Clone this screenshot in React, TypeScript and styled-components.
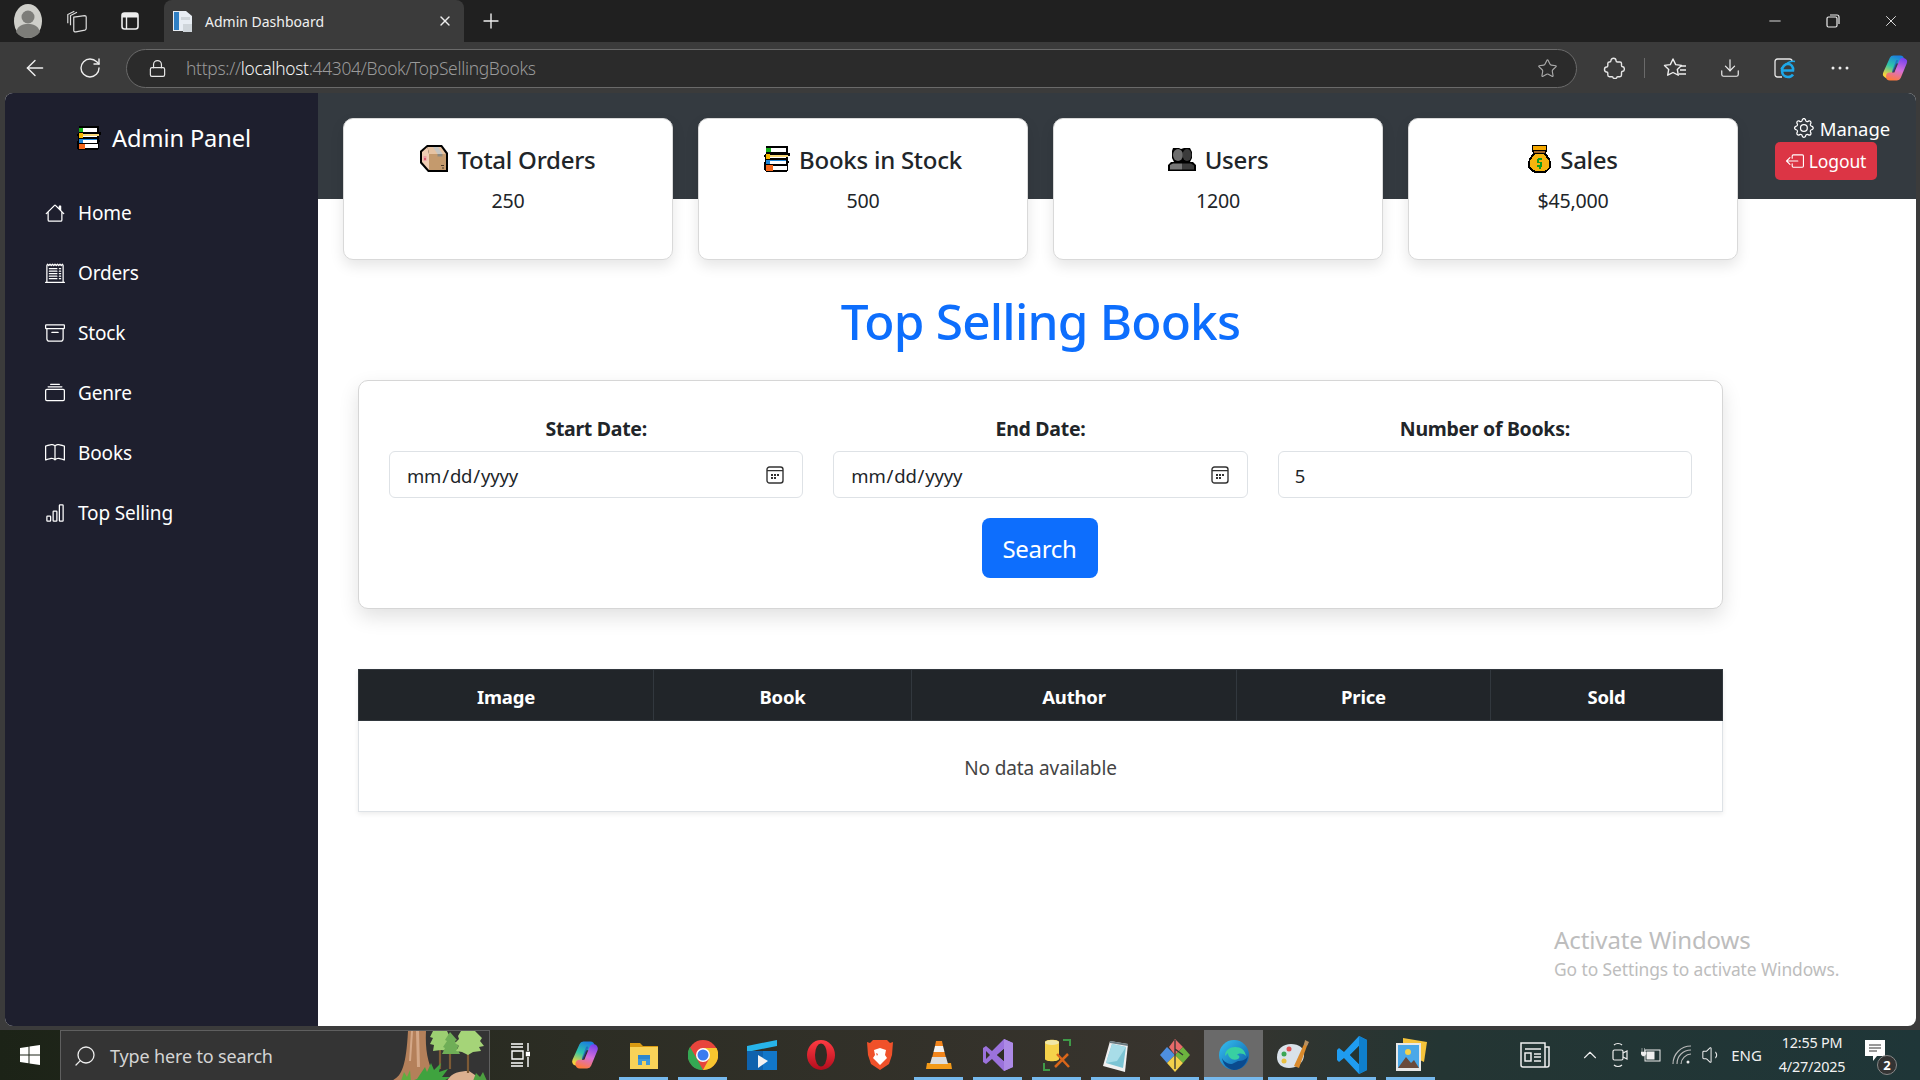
import React from "react";
import styled, { createGlobalStyle } from "styled-components";
import { BsHouse, BsReceiptCutoff, BsArchive, BsCollection, BsBook, BsBarChart, BsGear, BsBoxArrowLeft } from "react-icons/bs";
import { ArrowLeft, RotateCw, Lock, Star, Download, Plus, X, Minus, Search as SearchGlyph, ChevronUp, Volume1 } from "lucide-react";

const FONT = `"Noto Sans", "Open Sans", sans-serif`;
const CALENDAR = `url("data:image/svg+xml,%3Csvg xmlns='http://www.w3.org/2000/svg' viewBox='0 0 18 18' fill='none'%3E%3Crect x='1' y='1' width='16' height='16' rx='2.5' stroke='%23333' stroke-width='1.4'/%3E%3Cpath d='M1 4.6h16' stroke='%23333' stroke-width='1.4'/%3E%3Cpath d='M5 8h2v2H5zM8 8h2v2H8zM11 8h2v2h-2zM5 11h2v2H5zM8 11h2v2H8z' fill='%23333'/%3E%3C/svg%3E")`;

const Global = createGlobalStyle`
  * { box-sizing: border-box; }
  html, body { margin: 0; padding: 0; background: #3b3b3b; }
  body { font-family: ${FONT}; color: #212529; overflow: hidden; }
`;

const Screen = styled.div`
  width: 1920px; height: 1080px; display: flex; flex-direction: column; position: relative; overflow: hidden;
`;
const TabStrip = styled.div`
  height: 42px; background: #202020; display: flex; align-items: center; color: #fff; flex: none;
`;
const StripButton = styled.div<{ $w: number }>`
  width: ${p => p.$w}px; height: 42px; flex: none; display: flex; align-items: center; justify-content: center;
`;
const Tab = styled.div`
  width: 300px; height: 42px; background: #3b3b3b; border-radius: 8px 8px 0 0; display: flex; align-items: center;
  padding: 0 11px 0 9px; gap: 12px; flex: none;
`;
const TabTitle = styled.span`
  flex: 1; font-size: 14px; color: #f0f0f0; letter-spacing: 0; white-space: nowrap;
`;
const WindowControls = styled.div`
  margin-left: auto; display: flex; padding-right: 0;
`;
const WindowButton = styled.div`
  width: 58px; height: 42px; display: flex; align-items: center; justify-content: center;
`;
const Toolbar = styled.div`
  height: 51px; background: #3b3b3b; display: flex; align-items: center; padding-left: 10px; flex: none; color: #fff;
`;
const NavButton = styled.div`
  width: 50px; height: 40px; display: flex; align-items: center; justify-content: center; margin-right: 5px; flex: none;
`;
const UrlBar = styled.div`
  width: 1451px; height: 39px; margin-left: 6px; border: 1px solid #6a6a6a; border-radius: 20px; background: #2b2b2b;
  display: flex; align-items: center; padding: 0 18px 0 21px; flex: none; margin-top: 1px;
`;
const UrlText = styled.span`
  margin-left: 19px; font-size: 17.4px; color: #9a9a9a; letter-spacing: -.3px; white-space: nowrap; flex: 1; font-weight: 300;
`;
const UrlHost = styled.span`
  color: #f4f4f4;
`;
const ToolGroup = styled.div`
  display: flex; align-items: center; gap: 11px; margin-left: 15px;
`;
const ToolButton = styled.div`
  width: 44px; height: 40px; display: flex; align-items: center; justify-content: center; flex: none;
`;
const ToolDivider = styled.div`
  width: 1px; height: 20px; background: #6a6a6a; margin: 0 -3px;
`;
const Frame = styled.div`
  flex: 1; min-height: 0; display: flex; padding: 0 4px 4px 5px; background: #3b3b3b;
`;
const Page = styled.div`
  flex: 1; display: flex; background: #fff; border-radius: 8px; overflow: hidden; position: relative;
`;
const Sidebar = styled.nav`
  width: 313px; flex: none; background: #1e1f2e; color: #fff; padding-top: 29px; display: flex; flex-direction: column;
`;
const Brand = styled.div`
  display: flex; align-items: center; justify-content: center; gap: 11px; font-size: 23.6px; height: 32px; padding-left: 5px;
  letter-spacing: -.1px; margin-bottom: 29px;
`;
const NavList = styled.div`
  display: flex; flex-direction: column; padding-left: 40px;
`;
const NavItem = styled.a`
  height: 60px; display: flex; align-items: center; gap: 13px; font-size: 19px; color: #fff; letter-spacing: -.15px;
  svg { width: 20px; height: 20px; flex: none; }
`;
const Main = styled.main`
  flex: 1; min-width: 0; display: flex; flex-direction: column;
`;
const Band = styled.header`
  height: 106px; background: #343a40; flex: none; display: flex; padding: 23px 0 0 25px; gap: 37px;
`;
const Cards = styled.div`
  display: flex; gap: 25px; margin-top: 2px;
`;
const Card = styled.section`
  width: 330px; height: 142px; background: #fff; border: 1px solid #d9d9d9; border-radius: 10px; flex: none;
  box-shadow: 0 6px 14px rgba(0,0,0,.1); display: flex; flex-direction: column; align-items: center; padding-top: 22px;
`;
const CardTitle = styled.h3`
  margin: 0; height: 36px; display: flex; align-items: center; gap: 9px; font-size: 24px; font-weight: 500; letter-spacing: -.25px; color: #212529;
`;
const CardValue = styled.p`
  margin: 11px 0 0; font-size: 19.6px; line-height: 26px; letter-spacing: -.2px; color: #212529;
`;
const Actions = styled.div`
  display: flex; flex-direction: column; width: 115px; color: #fff;
`;
const ManageLink = styled.a`
  height: 24px; margin-bottom: 2px; display: flex; align-items: center; gap: 6px; font-size: 18.5px; color: #fff; margin-left: 19px; white-space: nowrap;
  letter-spacing: -.1px;
  svg { width: 20px; height: 20px; }
`;
const LogoutButton = styled.button`
  width: 102px; height: 38px; background: #dc3545; color: #fff; border: 0; border-radius: 5px; font: 17.5px ${FONT}; display: flex; align-items: center;
  justify-content: center; gap: 5px; padding: 0; letter-spacing: -.1px;
  svg { width: 18px; height: 18px; }
`;
const Content = styled.div`
  padding: 0 193px 0 40px; display: flex; flex-direction: column; flex: 1;
`;
const Heading = styled.h1`
  margin: 97px 0 0; height: 50px; line-height: 50px; text-align: center; color: #0d6efd; font-size: 49.5px; font-weight: 500; letter-spacing: -.8px;
  white-space: nowrap;
`;
const FilterCard = styled.form`
  margin-top: 34px; height: 229px; border: 1px solid #d6d6d6; border-radius: 10px; background: #fff; box-shadow: 0 8px 20px rgba(0,0,0,.12);
  padding: 34px 30px 0; display: flex; flex-direction: column;
`;
const Fields = styled.div`
  display: grid; grid-template-columns: repeat(3, 1fr); gap: 30px;
`;
const Field = styled.label`
  display: flex; flex-direction: column; align-items: stretch; text-align: center; gap: 9px; font-size: 19.5px; font-weight: 700; color: #212529; letter-spacing: -.3px; line-height: 27px;
`;
const Input = styled.input`
  height: 47px; width: 100%; border: 1px solid #dee2e6; border-radius: 6px; padding: 2px 16px 0; font: 400 18.5px ${FONT}; color: #212529; background: #fff;
  letter-spacing: -.2px; outline: none;
  &::-webkit-calendar-picker-indicator { background: ${CALENDAR} center / 100% 100% no-repeat; width: 18px; height: 18px; padding: 0; margin: -2px 2px 0 0; }
`;
const SearchButton = styled.button`
  align-self: center; width: 116px; height: 60px; margin: 20px 2px 0 0; background: #0d6efd; color: #fff; border: 0; border-radius: 8px; font: 400 24px ${FONT}; letter-spacing: -.3px;
`;
const DataTable = styled.table`
  margin-top: 60px; width: 1364px; border-collapse: collapse; table-layout: fixed; box-shadow: 0 2px 5px rgba(0,0,0,.08); background: #fff;
`;
const HeadCell = styled.th<{ $w: number }>`
  width: ${p => p.$w}px; height: 51px; background: #212529; color: #fff; font-size: 18.5px; font-weight: 700; border: 1px solid #32383e; letter-spacing: -.2px; padding: 2px 0 0;
`;
const EmptyCell = styled.td`
  height: 91px; text-align: center; font-size: 19px; color: #444; border: 1px solid #dee2e6; letter-spacing: -.1px; padding: 3px 0 0;
`;
const Watermark = styled.div`
  position: absolute; left: 1549px; top: 832px; color: #bdbdbd; line-height: 1; white-space: nowrap; pointer-events: none;
`;
const WatermarkTitle = styled.div`
  font-size: 24px; letter-spacing: -.1px; height: 30px; line-height: 30px;
`;
const WatermarkLine = styled.div`
  font-size: 17.4px; letter-spacing: -.08px; height: 28px; line-height: 28px;
`;
const Taskbar = styled.footer`
  height: 50px; flex: none; display: flex; align-items: stretch; color: #fff;
  background: linear-gradient(90deg, #1c2317 0%, #2c2d24 30%, #38342e 62%, #243533 75%, #1f3638 100%);
`;
const StartCell = styled.div`
  width: 60px; flex: none; display: flex; align-items: center; justify-content: center;
`;
const SearchBox = styled.div`
  width: 430px; flex: none; background: #343434; border: 1px solid #5f5f5f; border-bottom: 0; display: flex; align-items: center; padding-left: 12px; gap: 13px; overflow: hidden;
`;
const SearchHint = styled.span`
  font-size: 18px; color: #d4d4d4; letter-spacing: -.15px; flex: 1; white-space: nowrap;
`;
const TaskCell = styled.div<{ $w?: number; $pr?: number; $run?: boolean; $active?: boolean }>`
  width: ${p => p.$w ?? 59}px; padding-right: ${p => p.$pr ?? 0}px; flex: none; display: flex; align-items: center; justify-content: center; position: relative;
  background: ${p => (p.$active ? "#6a6a6a" : "transparent")};
  &::after {
    content: ""; display: ${p => (p.$run ? "block" : "none")}; position: absolute; bottom: 0; height: 3px; background: #76b9ed;
    left: ${p => (p.$active ? 0 : 5)}px; right: ${p => (p.$active ? 0 : 5)}px;
  }
`;
const Tray = styled.div`
  margin-left: auto; display: flex; align-items: stretch; padding-right: 25px;
`;
const TrayCell = styled.div<{ $w: number; $gap?: number }>`
  width: ${p => p.$w}px; margin-left: ${p => p.$gap ?? 0}px; display: flex; align-items: center; justify-content: center; font-size: 15px; color: #f0f0f0; flex: none;
`;
const Clock = styled.div`
  display: flex; flex-direction: column; align-items: center; font-size: 14.4px; line-height: 24px; letter-spacing: -.2px; color: #f2f2f2; white-space: nowrap;
`;
const NotifyBadge = styled.div`
  position: relative; width: 26px; height: 30px;
`;
const NotifyCount = styled.span`
  position: absolute; right: -6px; bottom: -5px; width: 20px; height: 20px; border-radius: 50%; background: #333; border: 1px solid #888; font-size: 13px; font-weight: 700; display: flex; align-items: center; justify-content: center; color: #fff;
`;

/* ---------- drawings ---------- */
const Avatar = () => (
  <svg width="28" height="34" viewBox="0 0 28 34"><ellipse cx="14" cy="17" rx="14" ry="17" fill="#cfcfca"/><circle cx="14" cy="13" r="6.5" fill="#7d7d79"/><path d="M2 28c2-7 7-8 12-8s10 1 12 8c-3 4-7 6-12 6s-9-2-12-6z" fill="#7d7d79"/></svg>
);
const Workspaces = () => (
  <svg width="26" height="26" viewBox="0 0 24 24" fill="none" stroke="#ddd" strokeWidth="1.1"><path d="M6 16V7l6-3M3.500 14V6l6-3"/><path d="M9 8.500l10-1.500c1 0 1.500.5 1.500 1.300V19c0 .8-.5 1.200-1.200 1.400L11 22c-1 .2-2-.3-2-1.300z"/></svg>
);
const VerticalTabs = () => (
  <svg width="20" height="20" viewBox="0 0 20 20" fill="none"><rect x="2" y="2" width="16" height="16" rx="2.5" stroke="#eee" strokeWidth="1.6"/><path d="M2 6.500V4.500C2 3 3 2 4.500 2h11C17 2 18 3 18 4.500v2z" fill="#eee"/><path d="M6.500 6v12" stroke="#eee" strokeWidth="1.4"/></svg>
);
const Favicon = () => (
  <svg width="20" height="24" viewBox="0 0 20 24"><path d="M0 2h13l6 5v15H0z" fill="#e8edf3"/><path d="M1 3h5v18H1z" fill="#2f7fc4"/><path d="M8 8h9v3H8zM10 15h9v8h-9z" fill="#cfd5da"/></svg>
);
const Puzzle = () => (
  <svg width="22" height="22" viewBox="0 0 22 22" fill="none" stroke="#e6e6e6" strokeWidth="1.4" strokeLinejoin="round"><path d="M8 3.500c0-3 5-3 5 0 0 1 0 1.500 1.500 1.500H17c1 0 1.500.6 1.500 1.500v2c0 1 .6 1.200 1.200 1.200 2.200 0 2.200 4.600 0 4.600-.6 0-1.200.4-1.200 1.200V18c0 1-.6 1.700-1.600 1.700h-2.200c-.8 0-1 .5-1 1 0 1-3.600 1-3.600 0 0-.5-.4-1-1-1H6.500c-1 0-1.700-.6-1.700-1.600V16c0-.9-.5-1-1.200-1-2.800 0-2.800-5 0-5 .8 0 1.200-.5 1.200-1.200V6.600c0-1 .7-1.600 1.600-1.600C7.500 5 8 4.500 8 3.500z"/></svg>
);
const FavStar = () => (
  <svg width="24" height="22" viewBox="0 0 24 22" fill="none" stroke="#eee" strokeWidth="1.4" strokeLinejoin="round"><path d="M10 2l2.700 5.600 5.800.8-4.200 4 1 5.800L10 15.500l-5.300 2.700 1-5.800-4.200-4 5.800-.8z"/><path d="M17 9h6M17 13h6M16 17h7"/></svg>
);
const IeLogo = () => (
  <svg width="22" height="22" viewBox="0 0 22 22" fill="none">
    <path d="M8 20H3.500C2 20 1 19 1 17.500V4.500C1 3 2 2 3.500 2h12C17 2 18 3 18 4" stroke="#e8e8e8" strokeWidth="1.3"/>
    <path d="M8.500 13.500h10.500c.6-4-2-6.500-5-6.500s-6 2.700-6 6.500 2.500 6.500 6 6.500c2.200 0 4-1 5-2.500" stroke="#1ea7e8" strokeWidth="2.600"/>
    <path d="M7 12c4-6 10-8.500 14-7.500" stroke="#1ea7e8" strokeWidth="1.500"/>
  </svg>
);
const Dots = () => (
  <svg width="18" height="4" viewBox="0 0 18 4" fill="#eee"><circle cx="2" cy="2" r="1.500"/><circle cx="9" cy="2" r="1.500"/><circle cx="16" cy="2" r="1.500"/></svg>
);
const Copilot = ({ size = 28, id = "c" }: { size?: number; id?: string }) => (
  <svg width={size} height={size} viewBox="0 0 28 28" fill="none" strokeLinecap="round">
    <defs>
      <linearGradient id={id + "a"} gradientUnits="userSpaceOnUse" x1="14" y1="1" x2="5" y2="25"><stop offset="0" stopColor="#1b7fe0"/><stop offset=".45" stopColor="#2fc7a8"/><stop offset=".85" stopColor="#f6d13d"/></linearGradient>
      <linearGradient id={id + "b"} gradientUnits="userSpaceOnUse" x1="22" y1="3" x2="14" y2="27"><stop offset="0" stopColor="#6a3df0"/><stop offset=".55" stopColor="#d66fd8"/><stop offset="1" stopColor="#ff7a3d"/></linearGradient>
    </defs>
    <path d="M19 5.500H12.500L6 20" stroke={`url(#${id}a)`} strokeWidth="8" strokeLinejoin="round"/>
    <path d="M22 8l-6 14.500H9" stroke={`url(#${id}b)`} strokeWidth="8" strokeLinejoin="round"/>
    <path d="M16 7l-4 10" stroke="#1d4fc4" strokeWidth="2" opacity=".55"/>
  </svg>
);
const BoxEmoji = () => (
  <svg width="28" height="28" viewBox="0 0 28 28"><path d="M7 0h15l6 8v19H8l-8-9V6z" fill="#000"/><path d="M7.500 2H21l5 7H9z" fill="#e6c3a2"/><path d="M2 7l5.500-5L9 9v16l-7-8z" fill="#efcdb4"/><path d="M9 9h17v16H9z" fill="#c49a6d"/><path d="M13 2h5l4.500 7h-5z" fill="#c6c6c2"/><path d="M17.500 9h5v2.500h-5z" fill="#8f8a80"/><path d="M3.500 11h3v5h-3z" fill="#eea0a8"/><path d="M4.500 13h1v2h-1z" fill="#c81e3a"/><path d="M21 20h3v1h-3zM22 22.500h2v1h-2z" fill="#4a3826"/></svg>
);
const BooksEmoji = ({ size = 26 }: { size?: number }) => (
  <svg width={size} height={size} viewBox="0 0 26 26" shapeRendering="crispEdges"><path d="M2 0h22v7h2v3h-2v5h1v2h-1v7l-2 2H2l-2-2v-7l1-2v-3L0 9l2-2z" fill="#000"/><path d="M2 2h5v4H2z" fill="#17b01a"/><path d="M7 2h15v4H7z" fill="#fff"/><path d="M2 8h4v5H2z" fill="#f5b400"/><path d="M6 9h18v2H6z" fill="#f7d778"/><path d="M6 11h16v1H6z" fill="#fff"/><path d="M2 14h4v4H2z" fill="#1d84d6"/><path d="M6 14h16v1H6z" fill="#1d84d6"/><path d="M6 15h16v3H6z" fill="#fff"/><path d="M2 19h7v6H2z" fill="#f5661a"/><path d="M9 20h14v4H9z" fill="#fff"/></svg>
);
const UsersEmoji = () => (
  <svg width="28" height="24" viewBox="0 0 28 24"><path d="M5 1h6l2 1 3-1h6l2 4v6l-2 4h3l3 3v6H0v-6l3-3h3l-2-4V4z" fill="#000"/><ellipse cx="10" cy="8" rx="5" ry="6" fill="#6d6d6d"/><ellipse cx="19" cy="8" rx="4.500" ry="6" fill="#3b3b3b"/><path d="M2 18l3-1.500h9v6H2z" fill="#777"/><path d="M14 16.500h9l3 2V22.500H14z" fill="#3c3c3c"/></svg>
);
const BagEmoji = () => (
  <svg width="23" height="28" viewBox="0 0 23 28" shapeRendering="crispEdges"><path d="M4 0h15v6l-1 2 4 6 1 4v4l-3 4-3 2H7l-4-2-3-4v-4l1-4 4-6-1-2z" fill="#000"/><path d="M5 1h13v4H5z" fill="#f5a800"/><path d="M6 6h11v2H6z" fill="#a0652a"/><path d="M7 9h9l5 7v6l-3 3-3 1H8l-3-1-3-3v-6z" fill="#f6b40e"/><path d="M10 13h4v2h-3v2h3v5h-1v2h-2v-2H9v-2h3v-2H9v-4z" fill="#0f9a1f"/></svg>
);
const WinLogo = () => (
  <svg width="20" height="20" viewBox="0 0 20 20" fill="#fff"><path d="M0 3l8.500-1.200V9.500H0zM9.500 1.600L20 0v9.500H9.500zM0 10.500h8.500v7.700L0 17zM9.500 10.500H20V20L9.500 18.400z"/></svg>
);
const Forest = () => (
  <svg width="100" height="50" viewBox="0 0 100 50" style={{ flex: "none" }}>
    <path d="M2 50c10-4 15-12 17-50h18c-1 20 2 36 12 50z" fill="#b4805a"/>
    <path d="M27 0h3l1 36h-3zM22 0h2l-2 30h-2z" fill="#d4a888"/>
    <path d="M58 50c4-8 12-10 22-10l15 10z" fill="#dcb090"/>
    <path d="M51 14V38M61 12V38M79 14V42" stroke="#7d5a35" strokeWidth="2.2"/>
    <path d="M44 0h14l3 6-2 2 3 5-3 1 1 6-8-1-8 1 1-6-4-1 3-6-3-1z" fill="#9ccf72"/>
    <path d="M61 1l7 8-2 1 4 6-2 1 3 6H53l3-6-2-1 4-6-2-1z" fill="#6fae57"/>
    <path d="M72 0h14l7 7-2 3 4 5-5 1 2 4-8 1-5 3-6-3-6-1 3-5-4-3 4-4-1-3z" fill="#a5d478"/>
    <path d="M28 48l8-12 2 5 4-9 3 7 7-7-2 9 9-3-6 8 8 0-6 4H22z" fill="#3fa33f"/>
    <path d="M12 50l3-9 3 5 3-7 1 11z" fill="#5fae3f"/>
    <path d="M84 50l3-8 4 4 3-5 4 9z" fill="#4da040"/>
  </svg>
);
const TaskView = () => (
  <svg width="20" height="24" viewBox="0 0 20 24" fill="none" stroke="#fff" strokeWidth="1.4"><path d="M1 1h12M1 4h12M1 23h12M1 20h12M2 8h11v8H2z"/><path d="M18 0v8M18 14v10"/><path d="M16.500 9.500h3v3h-3z" fill="#fff"/></svg>
);
const Folder = () => (
  <svg width="28" height="28" viewBox="0 0 28 28"><path d="M0 2h10l3 3h15v4H0z" fill="#d99a12"/><path d="M0 6h28v22H0z" fill="#f8d258"/><path d="M8 16h12v8h-4v-4h-4v4H8z" fill="#3f97d8"/><path d="M8 14h12v4H8z" fill="#2c86cf"/></svg>
);
const Chrome = () => (
  <svg width="30" height="30" viewBox="0 0 30 30"><circle cx="15" cy="15" r="15" fill="#e8453c"/><path d="M15 8h13.500A15 15 0 0 1 15 30l6-11z" fill="#f7c52f"/><path d="M9 19l6 11A15 15 0 0 1 2 7z" fill="#34a853"/><circle cx="15" cy="15" r="7" fill="#fff"/><circle cx="15" cy="15" r="5.500" fill="#3a7cf0"/></svg>
);
const Clapper = () => (
  <svg width="30" height="30" viewBox="0 0 30 30"><path d="M0 6L30 0v6L0 12z" fill="#27b4ea"/><path d="M0 11h30v19H0z" fill="#1277c9"/><path d="M0 11h16v19H0z" fill="#0f62ad"/><path d="M11 15l10 6-10 7z" fill="#f2f2f2"/></svg>
);
const Opera = () => (
  <svg width="28" height="30" viewBox="0 0 28 30"><defs><linearGradient id="op" x1="0" y1="0" x2="0" y2="1"><stop offset="0" stopColor="#ff3b42"/><stop offset="1" stopColor="#b30d1d"/></linearGradient></defs><ellipse cx="14" cy="15" rx="14" ry="15" fill="url(#op)"/><ellipse cx="14" cy="15" rx="6" ry="11.500" fill="#2e2d25"/></svg>
);
const Brave = () => (
  <svg width="26" height="30" viewBox="0 0 26 30"><path d="M6 0h14l3 3 3-1-1 13-3 9-9 6-9-6-3-9L0 2l3 1z" fill="#f0512a"/><path d="M7 10l6-2 6 2-1 5 2 3-4 4-3 3-3-3-4-4 2-3zM11 14l-2-1 1 3zM15 14l2-1-1 3z" fill="#fff"/></svg>
);
const Vlc = () => (
  <svg width="26" height="28" viewBox="0 0 26 28"><path d="M1 22h24l1 6H0z" fill="#f39a18"/><path d="M10 0h6l1 5H9z" fill="#f2851c"/><path d="M9 5h8l1.500 6h-11z" fill="#f3f3f3"/><path d="M7.500 11h11l1.500 6H6z" fill="#f2851c"/><path d="M6 16h14l2 7H4z" fill="#ddd"/></svg>
);
const VisualStudio = () => (
  <svg width="30" height="32" viewBox="0 0 30 32"><path d="M21 0l9 4v24l-9 4-12-12-6 5-3-2V9l3-2 6 5zM3 12v8l4-4zM21 10l-7 6 7 6z" fill="#9b72dc"/><path d="M21 0l9 4v24l-9 4z" fill="#ad8ae6"/><path d="M21 10l-7 6 7 6z" fill="#2e2d25"/></svg>
);
const DbTool = () => (
  <svg width="28" height="32" viewBox="0 0 28 32" fill="none"><path d="M2 3c0-3 14-3 14 0v17c0 3-14 3-14 0z" fill="#f5d24a"/><ellipse cx="9" cy="3.500" rx="7" ry="2.500" fill="#f0e7a8"/><path d="M20 1h7v6M1 24v7h6" stroke="#3f9a48" strokeWidth="2"/><path d="M12 28l13-13M14 15l12 13" stroke="#d9661a" strokeWidth="2.500"/></svg>
);
const Notepad = () => (
  <svg width="28" height="34" viewBox="0 0 28 34"><path d="M8 3l18 3-3 28-22-6z" fill="#f0f0f0"/><path d="M10 6l14 3-3 21-17-5z" fill="#7cc4d4"/><path d="M10 6l14 3-9 14-11 2z" fill="#a8dde8"/><path d="M8 3l18 3v2L8 5z" fill="#6a7a80"/></svg>
);
const Gitlike = () => (
  <svg width="30" height="34" viewBox="0 0 30 34"><path d="M7 9l8 8-8 8-7-8z" fill="#4e8fe0"/><path d="M15 1l8 8-8 8-6-8z" fill="#e86a6a"/><path d="M23 9l7 8-7 8-8-8z" fill="#6cb33f"/><path d="M15 17l8 8-8 9-8-9z" fill="#f2d04c"/><path d="M15 2v29M15 11l8 6" stroke="#333" strokeWidth="1.3"/></svg>
);
const Edge = () => (
  <svg width="30" height="30" viewBox="0 0 30 30"><defs><linearGradient id="ed" x1="0" y1="0" x2="1" y2="1"><stop offset="0" stopColor="#35c1f1"/><stop offset="1" stopColor="#0d5aa6"/></linearGradient></defs><circle cx="15" cy="15" r="15" fill="url(#ed)"/><path d="M6 16c0-6 5-9 10-9 6 0 10 3 11 9-3-3-7-3-9-1 3 0 3 3 1 4-5 2-10-1-10-6-1 1-2 2-3 3z" fill="#38d0a2"/><path d="M19 21c4 0 8-1 10-5-1 8-7 14-14 14-7-1-11-6-12-12 2 4 6 6 10 6z" fill="#0a4a8e"/></svg>
);
const Palette = () => (
  <svg width="32" height="30" viewBox="0 0 32 30"><path d="M14 4c8 0 14 4 13 12-1 8-8 12-15 12C5 28 0 24 0 17 0 9 6 4 14 4z" fill="#d9e2ea"/><circle cx="7" cy="14" r="2.500" fill="#3aa655"/><circle cx="12" cy="9" r="2.500" fill="#e05252"/><circle cx="7" cy="21" r="2.500" fill="#e8c040"/><path d="M17 26L28 2l3 1-9 25z" fill="#d98a2c"/><path d="M28 0l4 2-2 4-3-1z" fill="#b89060"/></svg>
);
const VsCode = () => (
  <svg width="30" height="38" viewBox="0 0 30 38"><path d="M22 0l8 4v30l-8 4L7 22l-5 4-2-2V14l2-2 5 4zM22 10L13 19l9 9z" fill="#1f9cf0"/><path d="M22 0l8 4v30l-8 4z" fill="#0f7fcc"/><path d="M22 10L13 19l9 9z" fill="#243533"/></svg>
);
const Photos = () => (
  <svg width="32" height="34" viewBox="0 0 32 34"><path d="M8 0l24 4-3 20L8 14z" fill="#f5c33b"/><path d="M1 5h25v28H1z" fill="#e8e8e8"/><path d="M3 7h21v23H3z" fill="#4aa8e8"/><circle cx="13" cy="14" r="3" fill="#f5d24a"/><path d="M3 30l8-11 5 6 3-3 5 8z" fill="#6a4a3a"/></svg>
);
const News = () => (
  <svg width="30" height="26" viewBox="0 0 30 26" fill="none" stroke="#f0f0f0" strokeWidth="1.5"><path d="M1 1h24v24H3c-1 0-2-1-2-2zM25 5h4v18c0 1-1 2-2 2h-2"/><path d="M5 7h16"/><path d="M5 11h6v8H5z"/><path d="M14 12h7M14 15h7M14 19h7"/></svg>
);
const Meet = () => (
  <svg width="16" height="26" viewBox="0 0 16 26" fill="none" stroke="#eee" strokeWidth="1.2"><path d="M2 3c2-2 6-2 8 0M2 23c2 2 6 2 8 0"/><rect x="1" y="8" width="10" height="10" rx="1.500"/><path d="M11 11l4-2v8l-4-2"/></svg>
);
const Battery = () => (
  <svg width="20" height="16" viewBox="0 0 20 16" fill="none"><rect x="4" y="3" width="15" height="11" stroke="#eee"/><rect x="5.500" y="4.500" width="8" height="8" fill="#eee"/><path d="M1 1v4M3.500 1v4M0 5h5v2l-1.500 2H1.500L0 7z" fill="#eee" stroke="#eee" strokeWidth=".5"/></svg>
);
const Wifi = () => (
  <svg width="20" height="20" viewBox="0 0 20 20" fill="none" stroke="#bbb" strokeWidth="1.1"><path d="M1 19C1 9 9 1 19 1M5 19c0-8 6-14 14-14M9 19c0-5 5-10 10-10"/><circle cx="16" cy="17" r="1.500" fill="#eee" stroke="none"/></svg>
);

const navItems = [
  { label: "Home", icon: <BsHouse /> },
  { label: "Orders", icon: <BsReceiptCutoff /> },
  { label: "Stock", icon: <BsArchive /> },
  { label: "Genre", icon: <BsCollection /> },
  { label: "Books", icon: <BsBook /> },
  { label: "Top Selling", icon: <BsBarChart /> },
];
const stats = [
  { title: "Total Orders", value: "250", icon: <BoxEmoji /> },
  { title: "Books in Stock", value: "500", icon: <BooksEmoji /> },
  { title: "Users", value: "1200", icon: <UsersEmoji /> },
  { title: "Sales", value: "$45,000", icon: <BagEmoji /> },
];
const columns = [
  { label: "Image", w: 295 },
  { label: "Book", w: 258 },
  { label: "Author", w: 325 },
  { label: "Price", w: 254 },
  { label: "Sold", w: 232 },
];
const apps = [
  { el: <Copilot size={30} id="tb" />, run: false },
  { el: <Folder />, run: true },
  { el: <Chrome />, run: true },
  { el: <Clapper />, run: false },
  { el: <Opera />, run: false },
  { el: <Brave />, run: false },
  { el: <Vlc />, run: true },
  { el: <VisualStudio />, run: true },
  { el: <DbTool />, run: true },
  { el: <Notepad />, run: true },
  { el: <Gitlike />, run: true },
  { el: <Edge />, run: true, active: true },
  { el: <Palette />, run: true },
  { el: <VsCode />, run: true },
  { el: <Photos />, run: true },
];

export default function App() {
  return (
    <Screen>
      <Global />
      <TabStrip>
        <StripButton $w={8} />
        <StripButton $w={40}><Avatar /></StripButton>
        <StripButton $w={58}><Workspaces /></StripButton>
        <StripButton $w={48}><VerticalTabs /></StripButton>
        <StripButton $w={10} />
        <Tab>
          <Favicon />
          <TabTitle>Admin Dashboard</TabTitle>
          <X size={16} color="#eee" />
        </Tab>
        <StripButton $w={54}><Plus size={24} color="#eee" strokeWidth={1.4} /></StripButton>
        <WindowControls>
          <WindowButton><Minus size={18} color="#eee" strokeWidth={1.2} /></WindowButton>
          <WindowButton>
            <svg width="14" height="14" viewBox="0 0 14 14" fill="none" stroke="#eee" strokeWidth="1.2"><rect x="1" y="3" width="10" height="10" rx="1.500"/><path d="M4 1h7c1 0 2 1 2 2v7"/></svg>
          </WindowButton>
          <WindowButton><X size={18} color="#eee" strokeWidth={1.2} /></WindowButton>
        </WindowControls>
      </TabStrip>
      <Toolbar>
        <NavButton><ArrowLeft size={26} strokeWidth={1.3} color="#eee" /></NavButton>
        <NavButton><RotateCw size={24} strokeWidth={1.4} color="#eee" /></NavButton>
        <UrlBar>
          <Lock size={19} strokeWidth={1.5} color="#e8e8e8" />
          <UrlText>https://<UrlHost>localhost</UrlHost>:44304/Book/TopSellingBooks</UrlText>
          <Star size={21} strokeWidth={1.3} color="#aaa" />
        </UrlBar>
        <ToolGroup>
          <ToolButton><Puzzle /></ToolButton>
          <ToolDivider />
          <ToolButton><FavStar /></ToolButton>
          <ToolButton><Download size={22} strokeWidth={1.3} color="#eee" /></ToolButton>
          <ToolButton><IeLogo /></ToolButton>
          <ToolButton><Dots /></ToolButton>
          <ToolButton><Copilot id="tl" /></ToolButton>
        </ToolGroup>
      </Toolbar>
      <Frame>
        <Page>
          <Sidebar>
            <Brand><BooksEmoji size={24} />Admin Panel</Brand>
            <NavList>
              {navItems.map(n => (
                <NavItem key={n.label}>{n.icon}{n.label}</NavItem>
              ))}
            </NavList>
          </Sidebar>
          <Main>
            <Band>
              <Cards>
                {stats.map(s => (
                  <Card key={s.title}>
                    <CardTitle>{s.icon}{s.title}</CardTitle>
                    <CardValue>{s.value}</CardValue>
                  </Card>
                ))}
              </Cards>
              <Actions>
                <ManageLink><BsGear />Manage</ManageLink>
                <LogoutButton type="button"><BsBoxArrowLeft />Logout</LogoutButton>
              </Actions>
            </Band>
            <Content>
              <Heading>Top Selling Books</Heading>
              <FilterCard>
                <Fields>
                  <Field>Start Date:<Input type="date" /></Field>
                  <Field>End Date:<Input type="date" /></Field>
                  <Field>Number of Books:<Input type="number" defaultValue={5} /></Field>
                </Fields>
                <SearchButton type="button">Search</SearchButton>
              </FilterCard>
              <DataTable>
                <thead>
                  <tr>{columns.map(c => <HeadCell key={c.label} $w={c.w}>{c.label}</HeadCell>)}</tr>
                </thead>
                <tbody>
                  <tr><EmptyCell colSpan={5}>No data available</EmptyCell></tr>
                </tbody>
              </DataTable>
            </Content>
          </Main>
          <Watermark>
            <WatermarkTitle>Activate Windows</WatermarkTitle>
            <WatermarkLine>Go to Settings to activate Windows.</WatermarkLine>
          </Watermark>
        </Page>
      </Frame>
      <Taskbar>
        <StartCell><WinLogo /></StartCell>
        <SearchBox>
          <SearchGlyph size={24} strokeWidth={1.3} color="#eee" style={{ transform: "scaleX(-1)" }} />
          <SearchHint>Type here to search</SearchHint>
          <Forest />
        </SearchBox>
        <TaskCell $w={65} $pr={5}><TaskView /></TaskCell>
        {apps.map((a, i) => (
          <TaskCell key={i} $run={a.run} $active={a.active}>{a.el}</TaskCell>
        ))}
        <Tray>
          <TrayCell $w={60}><News /></TrayCell>
          <TrayCell $w={30} $gap={10}><ChevronUp size={22} strokeWidth={1.2} color="#eee" /></TrayCell>
          <TrayCell $w={30}><Meet /></TrayCell>
          <TrayCell $w={31}><Battery /></TrayCell>
          <TrayCell $w={31}><Wifi /></TrayCell>
          <TrayCell $w={30}><Volume1 size={22} strokeWidth={1.1} color="#eee" /></TrayCell>
          <TrayCell $w={33} $gap={3}>ENG</TrayCell>
          <TrayCell $w={98}><Clock><span>12:55 PM</span><span>4/27/2025</span></Clock></TrayCell>
          <TrayCell $w={34}>
            <NotifyBadge>
              <svg width="20" height="22" viewBox="0 0 20 22"><path d="M0 0h20v16H12l-4 5v-5H0z" fill="#fff"/><path d="M4 5h12M4 8h12M4 11h8" stroke="#333"/></svg>
              <NotifyCount>2</NotifyCount>
            </NotifyBadge>
          </TrayCell>
        </Tray>
      </Taskbar>
    </Screen>
  );
}
